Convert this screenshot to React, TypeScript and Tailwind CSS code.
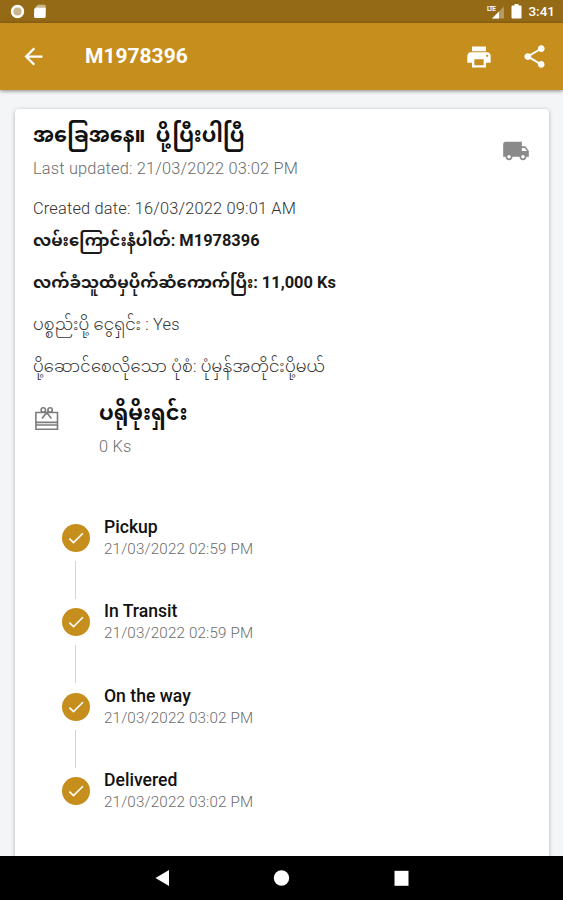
import { ReactNode } from 'react'
import { MdArrowBack, MdCheck, MdLocalShipping, MdPrint, MdShare } from 'react-icons/md'
import clsx from 'clsx'

const steps = [
  { title: 'Pickup', date: '21/03/2022 02:59 PM' },
  { title: 'In Transit', date: '21/03/2022 02:59 PM' },
  { title: 'On the way', date: '21/03/2022 03:02 PM' },
  { title: 'Delivered', date: '21/03/2022 03:02 PM' },
]

function StatusBar() {
  return (
    <div className="flex h-[23px] shrink-0 items-center bg-[#946a17] pl-2.5 pr-2 text-white">
      <svg width="15" height="15" viewBox="0 0 15 15">
        <circle cx="7.5" cy="7.5" r="5.4" fill="#c9b68e" stroke="#fff" strokeWidth="2.6" />
      </svg>
      <svg className="ml-2" width="14" height="15" viewBox="0 0 14 15">
        <path d="M5 0.8h6.5q1.2 0 1.2 1.2v5H1V4.8z" fill="#c9b68e" />
        <path d="M1.2 5.6 3 3.8h9.7v8.7q0 1.4-1.4 1.4H2.4Q1 13.9 1 12.5z" fill="#fff" />
      </svg>
      <svg className="ml-auto" width="20" height="16" viewBox="0 0 20 16">
        <text x="2" y="6.5" fontSize="6.5" fontWeight="700" fill="#fff" fontFamily="Roboto, sans-serif" textLength="9">LTE</text>
        <path d="M19 2.5v12H7z" fill="#b79a5d" />
        <path d="M14 7.5v7H7z" fill="#fff" />
      </svg>
      <svg className="ml-1.5" width="11" height="15" viewBox="0 0 11 15">
        <path d="M3.5 0h4v1.5h2q1 0 1 1V13.5q0 1-1 1h-8q-1 0-1-1V2.5q0-1 1-1h2z" fill="#fff" />
      </svg>
      <span className="ml-1.5 pt-px text-[13.5px] font-medium leading-none">3:41</span>
    </div>
  )
}

function AppBar() {
  return (
    <header className="z-10 flex h-[67px] shrink-0 items-center bg-[#c68e1c] pl-5 pr-[15px] text-white shadow-[0_1px_4px_rgba(0,0,0,0.45)]">
      <MdArrowBack size={27} />
      <h1 className="ml-[38px] text-[21px] font-bold leading-none">M1978396</h1>
      <MdPrint className="ml-auto" size={28} />
      <MdShare className="ml-7" size={27} />
    </header>
  )
}

function GiftIcon() {
  return (
    <svg className="mt-1" width="28" height="28" viewBox="0 0 28 28" fill="none" stroke="#7c7c7c" strokeWidth="1.6">
      <path d="M2.9 7.5h21.6v16.8H2.9zM2.9 17.4h21.6M2.9 20h21.6" />
      <circle cx="10.3" cy="5" r="2.2" />
      <circle cx="17.1" cy="5" r="2.2" />
      <path d="M13.700 7.500 9 13.600M13.700 7.500l4.700 6.100M12.100 6.300l1.600 2.100 1.600-2.100" />
    </svg>
  )
}

function Line({ children, className }: { children: ReactNode; className?: string }) {
  return <p className={clsx('h-6 whitespace-pre text-[16.4px] leading-6', className)}>{children}</p>
}

function Timeline() {
  return (
    <ol className="mt-[56px] pl-[28.5px]">
      {steps.map((step, i) => (
        <li key={step.title} className="flex h-[84.4px]">
          <div className="flex w-7 flex-col items-center pt-[9px]">
            <div className="flex size-7 items-center justify-center rounded-full bg-[#c68e1c] text-white">
              <MdCheck size={20} />
            </div>
            {i < steps.length - 1 && <div className="mt-[9px] h-[38px] w-[1.5px] bg-[#d4d4d4]" />}
          </div>
          <div className="ml-[14.5px]">
            <h3 className="h-6 text-[17.6px] font-medium leading-6 text-[#111]">{step.title}</h3>
            <p className="text-[15.2px] font-light leading-5 tracking-[0.16px] text-[#6c6c6c]">{step.date}</p>
          </div>
        </li>
      ))}
    </ol>
  )
}

function NavBar() {
  return (
    <nav className="z-10 flex h-11 shrink-0 items-center justify-center bg-black">
      <svg width="260" height="20" viewBox="0 0 260 20" fill="#fff">
        <path d="M17 2v16L3.5 10z" />
        <circle cx="129.5" cy="10" r="7.7" />
        <path d="M242.5 2.8h14v15h-14z" />
      </svg>
    </nav>
  )
}

export default function App() {
  return (
    <div className="flex h-[900px] w-[563px] flex-col overflow-hidden bg-[#f3f5f7] font-[Roboto,'Noto_Sans_Myanmar',sans-serif] text-base text-[#333]">
      <StatusBar />
      <AppBar />
      <main className="min-h-0 flex-1 overflow-hidden pl-[15px] pr-3.5 pt-[19px]">
        <section className="h-[800px] rounded-[4px] bg-white pl-[18px] pr-[19px] pt-2.5 shadow-[0_1px_4px_rgba(0,0,0,0.28)]">
          <div className="flex justify-between">
            <div>
              <h2 className="h-8 whitespace-pre text-[20.8px] font-bold leading-8 text-[#111]">အခြေအနေ။  ပို့ပြီးပါပြီ</h2>
              <Line className="mt-1.5 font-light tracking-[0.18px] text-[#6c6c6c]">Last updated: 21/03/2022 03:02 PM</Line>
            </div>
            <MdLocalShipping className="mt-[18px] text-[#8a8a8a]" size={28} />
          </div>
          <Line className="mt-4 font-light tracking-[0.18px]">Created date: 16/03/2022 09:01 AM</Line>
          <Line className="mt-2 font-bold text-[#1a1a1a]">လမ်းကြောင်းနံပါတ်: M1978396</Line>
          <Line className="mt-[18px] font-bold text-[#1a1a1a]">လက်ခံသူထံမှပိုက်ဆံကောက်ပြီး: 11,000 Ks</Line>
          <Line className="mt-[18px] font-light tracking-[0.18px]">ပစ္စည်းပို့ ငွေရှင်း : Yes</Line>
          <Line className="mt-[18px] font-light tracking-[0.18px]">ပို့ဆောင်စေလိုသော ပုံစံ: ပုံမှန်အတိုင်းပို့မယ်</Line>
          <div className="mt-[22px] flex">
            <GiftIcon />
            <div className="ml-[38px]">
              <h2 className="h-6 text-[21px] font-bold leading-6 text-[#111]">ပရိုမိုးရှင်း</h2>
              <Line className="mt-[10px] font-light tracking-[0.18px] text-[#6c6c6c]">0 Ks</Line>
            </div>
          </div>
          <Timeline />
        </section>
      </main>
      <NavBar />
    </div>
  )
}
